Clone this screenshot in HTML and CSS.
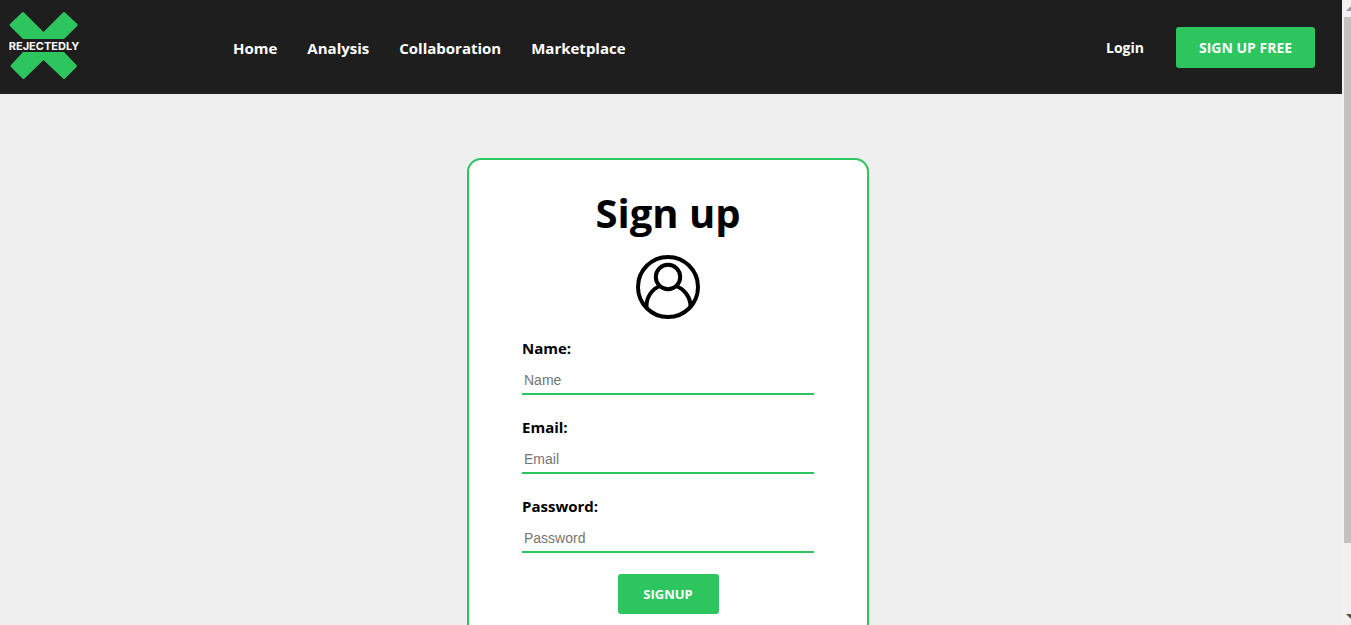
FILE: index.html
```html
<!DOCTYPE html>
<html lang="en">
<head>
<meta charset="utf-8">
<meta name="viewport" content="width=device-width, initial-scale=1">
<title>Rejectedly - Sign up</title>
<link rel="stylesheet" href="styles.css">
</head>
<body>
<div class="viewport">
  <div class="page">
    <header class="header">
      <a class="logo" href="#" aria-label="Rejectedly">
        <svg class="logo-mark" viewBox="0 0 88 94">
          <g fill="#2dc55e">
            <path d="M22 12.500Q23 11.500 24 12.500L43.500 32L63 12.500Q64 11.500 65 12.500L77.200 24Q78.200 25 77.200 26L64 39H23L10 26Q9 25 10 24Z"/>
            <path d="M23 52H64L76.500 65Q77.500 66 76.500 67L65 78.500Q64 79.500 63 78.500L43.500 60L24.500 78.500Q23.500 79.500 22.500 78.500L11 67Q10 66 11 65Z"/>
          </g>
          <text class="logo-text" x="44" y="50" text-anchor="middle">REJECTEDLY</text>
        </svg>
      </a>
      <nav class="nav">
        <a href="#">Home</a>
        <a href="#">Analysis</a>
        <a href="#">Collaboration</a>
        <a href="#">Marketplace</a>
      </nav>
      <div class="account">
        <a class="login" href="#">Login</a>
        <a class="button button-free" href="#">SIGN UP FREE</a>
      </div>
    </header>
    <main class="main">
      <form class="card">
        <h1 class="title">Sign up</h1>
        <svg class="avatar" viewBox="0 0 64 64" fill="none" stroke="#000" stroke-width="4" aria-hidden="true">
          <circle cx="32" cy="32" r="30"/>
          <circle cx="32" cy="22" r="12.200"/>
          <path d="M10.500 53V51C10.500 42 16 34 24 31M40 31C48 34 54.500 42 54.500 51V53"/>
        </svg>
        <div class="field">
          <label for="name">Name:</label>
          <input id="name" type="text" placeholder="Name">
        </div>
        <div class="field">
          <label for="email">Email:</label>
          <input id="email" type="email" placeholder="Email">
        </div>
        <div class="field">
          <label for="password">Password:</label>
          <input id="password" type="password" placeholder="Password">
        </div>
        <button class="button button-submit" type="submit">SIGNUP</button>
      </form>
    </main>
  </div>
  <div class="scrollbar" aria-hidden="true">
    <svg class="arrow" viewBox="0 0 7 17"><path d="M2 11L7 6V11Z" fill="#a393a8"/></svg>
    <div class="track"><div class="thumb"></div></div>
    <svg class="arrow" viewBox="0 0 7 17"><path d="M2 6H7V11Z" fill="#505a3c"/></svg>
  </div>
</div>
</body>
</html>
```
FILE: styles.css
```css
* {
  box-sizing: border-box;
}

body {
  margin: 0;
  background: #efefef;
  color: #000;
  font-family: "Open Sans", "Noto Sans", sans-serif;
  font-size: 15px;
  font-weight: 700;
}

a {
  color: #fff;
  text-decoration: none;
}

.viewport {
  display: flex;
  height: 100vh;
  overflow: hidden;
}

.page {
  flex: 1;
  min-width: 0;
}

.header {
  display: flex;
  align-items: center;
  min-height: 94px;
  padding-right: 27px;
  background: #1e1e1e;
}

.logo,
.logo-mark {
  display: block;
  width: 88px;
  height: 94px;
}

.logo-text {
  fill: #fff;
  font-family: Inter, sans-serif;
  font-size: 11px;
  font-weight: 700;
}

.nav {
  display: flex;
  gap: 30px;
  margin-left: 145px;
  padding-top: 2px;
}

.account {
  display: flex;
  align-items: center;
  gap: 32px;
  margin-left: auto;
  font-size: 14px;
}

.button {
  border: 0;
  border-radius: 3px;
  background: #2dc55e;
  color: #fff;
  font-family: inherit;
  font-size: 13px;
  font-weight: 700;
  line-height: 20px;
  text-align: center;
}

.button-free {
  min-width: 139px;
  padding: 11px 16px 10px;
  font-size: 14px;
}

.main {
  display: flex;
  justify-content: center;
  padding: 64px 6px 64px 0;
}

.card {
  display: flex;
  flex-direction: column;
  align-items: center;
  width: 402px;
  padding: 25px 53px 48px;
  border: 2px solid #2dc55e;
  border-radius: 14px;
  background: #fff;
}

.title {
  margin: 0;
  font-size: 40px;
  line-height: 56px;
}

.avatar {
  width: 64px;
  height: 64px;
  margin: 14px 0 19px;
}

.field {
  display: flex;
  flex-direction: column;
  gap: 6px;
  width: 100%;
  line-height: 20px;
}

.field + .field {
  margin-top: 22px;
}

.field input {
  width: 100%;
  height: 31px;
  padding: 3px 2px 1px;
  border: 0;
  border-bottom: 2px solid #2dc55e;
  background: transparent;
  font-family: "Liberation Sans", Arial, sans-serif;
  font-size: 14px;
}

.field input::placeholder {
  color: #757575;
}

.button-submit {
  min-width: 101px;
  margin-top: 21px;
  padding: 10px 16px;
}

.scrollbar {
  display: flex;
  flex-direction: column;
  width: 9px;
  padding-left: 2px;
  background: #f1f1f1;
}

.arrow {
  width: 7px;
  height: 17px;
}

.track {
  flex: 1;
}

.thumb {
  height: 89%;
  background: #c1c1c1;
}
```
